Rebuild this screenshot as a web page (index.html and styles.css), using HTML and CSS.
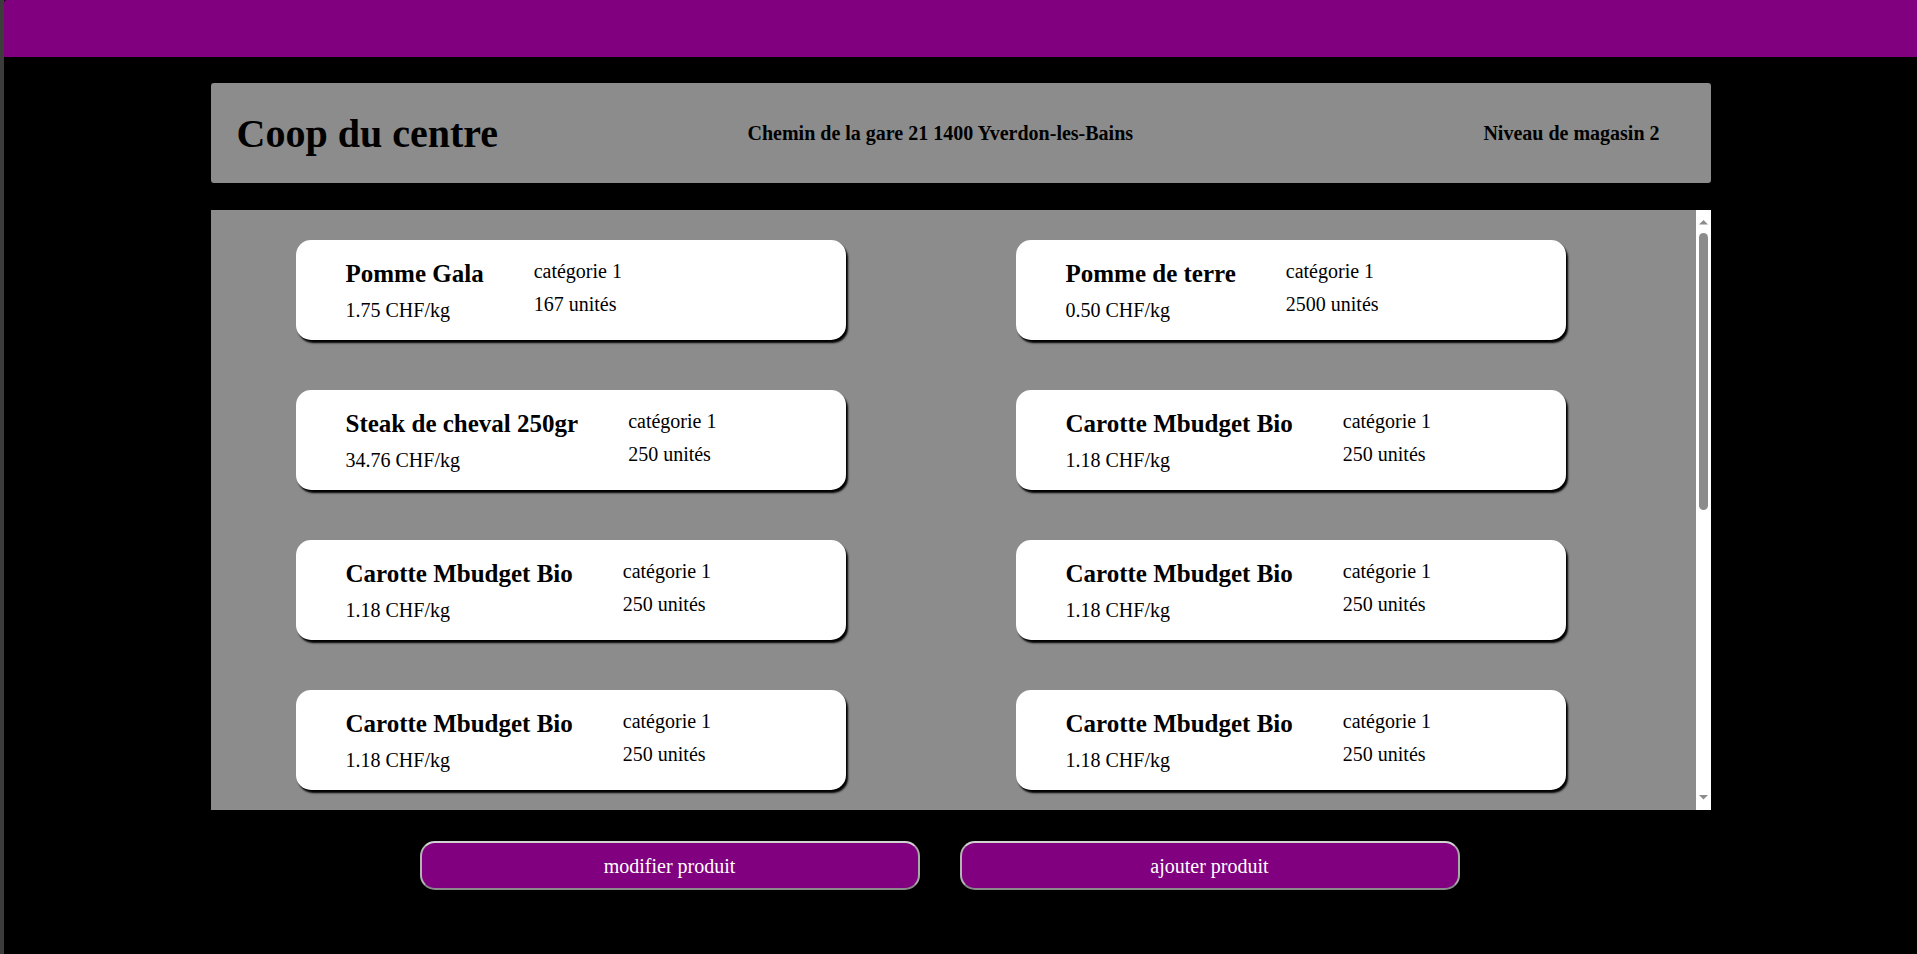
FILE: index.html
```html
<!DOCTYPE html>
<html lang="fr">
<head>
<meta charset="utf-8">
<title>Coop du centre</title>
<link rel="stylesheet" href="styles.css">
</head>
<body>
<div class="page">
  <div class="topbar"></div>
  <main class="main">
    <header class="store">
      <h1 class="store-name">Coop du centre</h1>
      <h3 class="store-address">Chemin de la gare 21 1400 Yverdon-les-Bains</h3>
      <h3 class="store-level">Niveau de magasin 2</h3>
    </header>
    <section class="products">
      <div class="list">
        <div class="grid">
          <div class="card"><div class="info"><div class="col"><p class="name">Pomme Gala</p><p>1.75 CHF/kg</p></div><div class="col"><p>catégorie 1</p><p>167 unités</p></div></div></div>
          <div class="card"><div class="info"><div class="col"><p class="name">Pomme de terre</p><p>0.50 CHF/kg</p></div><div class="col"><p>catégorie 1</p><p>2500 unités</p></div></div></div>
          <div class="card"><div class="info"><div class="col"><p class="name">Steak de cheval 250gr</p><p>34.76 CHF/kg</p></div><div class="col"><p>catégorie 1</p><p>250 unités</p></div></div></div>
          <div class="card"><div class="info"><div class="col"><p class="name">Carotte Mbudget Bio</p><p>1.18 CHF/kg</p></div><div class="col"><p>catégorie 1</p><p>250 unités</p></div></div></div>
          <div class="card"><div class="info"><div class="col"><p class="name">Carotte Mbudget Bio</p><p>1.18 CHF/kg</p></div><div class="col"><p>catégorie 1</p><p>250 unités</p></div></div></div>
          <div class="card"><div class="info"><div class="col"><p class="name">Carotte Mbudget Bio</p><p>1.18 CHF/kg</p></div><div class="col"><p>catégorie 1</p><p>250 unités</p></div></div></div>
          <div class="card"><div class="info"><div class="col"><p class="name">Carotte Mbudget Bio</p><p>1.18 CHF/kg</p></div><div class="col"><p>catégorie 1</p><p>250 unités</p></div></div></div>
          <div class="card"><div class="info"><div class="col"><p class="name">Carotte Mbudget Bio</p><p>1.18 CHF/kg</p></div><div class="col"><p>catégorie 1</p><p>250 unités</p></div></div></div>
        </div>
      </div>
      <div class="scrollbar" aria-hidden="true">
        <svg class="sb-btn" width="15" height="20" viewBox="0 0 15 20"><polygon points="3,14.5 7.5,10 12,14.5" fill="#8c8c8c"/></svg>
        <div class="sb-track"><div class="sb-thumb"></div></div>
        <svg class="sb-btn" width="15" height="20" viewBox="0 0 15 20"><polygon points="3,5 12,5 7.5,9.5" fill="#8c8c8c"/></svg>
      </div>
    </section>
    <div class="actions">
      <button class="btn" type="button">modifier produit</button>
      <button class="btn" type="button">ajouter produit</button>
    </div>
  </main>
</div>
</body>
</html>
```
FILE: styles.css
```css
html, body {
  margin: 0;
  padding: 0;
  background: #000;
}

body {
  font-family: "Liberation Serif", "Times New Roman", serif;
  color: #000;
}

.page {
  min-height: 100vh;
  border-left: 4px solid #3c3c3c;
  box-sizing: border-box;
  background: #000;
}

.topbar {
  height: 57px;
  background: #800080;
  border-top-left-radius: 3px;
}

.main {
  width: 1500px;
  margin: 0 auto;
  padding-top: 26px;
}

.store {
  height: 100px;
  box-sizing: border-box;
  background: #8c8c8c;
  border-radius: 3px;
  display: grid;
  grid-template-columns: 511px 1fr auto;
  align-items: center;
  padding: 0 51px 0 26px;
}

.store-name {
  margin: 0;
  font-size: 40px;
  font-weight: bold;
}

.store-address,
.store-level {
  margin: 0;
  font-size: 20px;
  font-weight: bold;
}

.products {
  margin-top: 27px;
  height: 600px;
  background: #8c8c8c;
  display: flex;
}

.list {
  flex: 1;
  overflow: hidden;
}

.scrollbar {
  width: 15px;
  background: #fff;
  display: flex;
  flex-direction: column;
}

.sb-btn {
  display: block;
  flex: none;
}

.sb-track {
  flex: 1;
  padding-top: 3px;
  display: flex;
  justify-content: center;
}

.sb-thumb {
  width: 9px;
  height: 277px;
  background: #8c8c8c;
  border-radius: 5px;
}

.grid {
  display: grid;
  grid-template-columns: 550px 550px;
  column-gap: 170px;
  row-gap: 50px;
  padding: 30px 0 0 85px;
}

.card {
  height: 100px;
  box-sizing: border-box;
  background: #fff;
  border-radius: 15px;
  box-shadow: 2px 3px 2px #000;
  display: flex;
  align-items: center;
  padding: 2px 0 0 50px;
}

.info {
  display: flex;
  align-items: flex-start;
  gap: 50px;
}

.col {
  display: flex;
  flex-direction: column;
  gap: 10px;
}

.col:first-child {
  gap: 11px;
}

.col p {
  margin: 0;
  font-size: 20px;
}

.col p.name {
  font-size: 25px;
  font-weight: bold;
}

.actions {
  display: flex;
  gap: 40px;
  padding: 31px 0 0 209px;
}

.btn {
  width: 500px;
  height: 49px;
  box-sizing: border-box;
  background: #800080;
  color: #fff;
  font-family: "Liberation Serif", "Times New Roman", serif;
  font-size: 20px;
  border: 2px solid;
  border-color: #d2d2d2 #a8a8a8 #8a8a8a #b4b4b4;
  border-radius: 15px;
  padding: 2px 0 0;
  cursor: pointer;
}
```
